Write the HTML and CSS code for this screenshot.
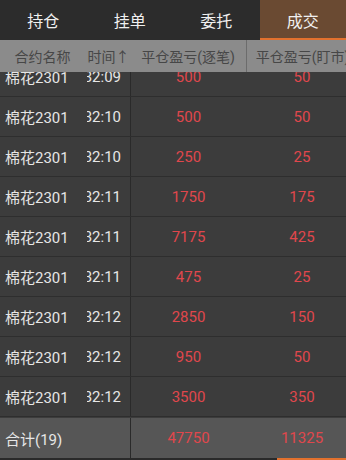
FILE: index.html
```html
<!DOCTYPE html>
<html lang="zh-CN">
<head>
    <meta charset="UTF-8">
    <meta name="viewport" content="width=device-width, initial-scale=1.0">
    <title>成交</title>
    <link rel="stylesheet" href="styles.css">
</head>
<body>
    <div class="tabs">
        <div class="tab">持仓</div>
        <div class="tab">挂单</div>
        <div class="tab">委托</div>
        <div class="tab active">成交</div>
    </div>

    <div class="table">
        <div class="row head">
            <div class="cell name">合约名称</div>
            <div class="cell time-h">时间↑</div>
            <div class="cell num">平仓盈亏(逐笔)</div>
            <div class="cell num last">平仓盈亏(盯市)</div>
        </div>

        <div class="body">
            <div class="rows" id="rows"></div>
        </div>

        <div class="row total">
            <div class="cell name">合计(19)</div>
            <div class="cell time"></div>
            <div class="cell num red">47750</div>
            <div class="cell num red">11325</div>
        </div>
    </div>

    <div class="bottom-bar"><span class="bottom-mark"></span></div>

    <script>
        // time column is scrolled sideways, only the tail of each time shows
        var trades = [
            ['32:09', 500, 50],
            ['32:10', 500, 50],
            ['32:10', 250, 25],
            ['32:11', 1750, 175],
            ['32:11', 7175, 425],
            ['32:11', 475, 25],
            ['32:12', 2850, 150],
            ['32:12', 950, 50],
            ['32:12', 3500, 350]
        ];

        var rows = document.getElementById('rows');
        trades.forEach(function (t) {
            var row = document.createElement('div');
            row.className = 'row item';
            row.innerHTML =
                '<div class="cell name">棉花2301</div>' +
                '<div class="cell time"><span>' + t[0] + '</span></div>' +
                '<div class="cell num red">' + t[1] + '</div>' +
                '<div class="cell num red">' + t[2] + '</div>';
            rows.appendChild(row);
        });
    </script>
</body>
</html>
```

FILE: styles.css
```css
body {
    margin: 0;
    padding: 0;
    width: 346px;
    height: 460px;
    overflow: hidden;
    background-color: #3c3c3c;
    font-family: Roboto, "Noto Sans CJK SC", sans-serif;
    color: #e6e6e6;
}
.tabs {
    display: flex;
    height: 40px;
    background-color: #2c2c2c;
}
.tab {
    flex: 1;
    display: flex;
    align-items: center;
    justify-content: center;
    font-size: 16px;
    color: #f0f0f0;
    box-sizing: border-box;
}
.tab.active {
    background-color: #6a4a32;
    border-bottom: 2px solid #e2712e;
    padding-top: 2px;
}
.table {
    width: 346px;
    overflow: hidden;
}
.row {
    display: grid;
    grid-template-columns: 87px 43px 116px 112px;
    width: 358px;
    box-sizing: border-box;
}
.cell {
    display: flex;
    align-items: center;
    white-space: nowrap;
    overflow: hidden;
}
.head {
    position: relative;
    z-index: 1;
    height: 32px;
    background-color: #8b8b8b;
    color: #474747;
    font-size: 14px;
}
.head .cell {
    justify-content: center;
}
.head .name {
    padding-left: 0;
    padding-right: 2px;
}
.head .last {
    border-left: 1px solid #6c6c6c;
}
.body {
    height: 346px;
    overflow: hidden;
}
.rows {
    margin-top: -15px;
}
.item {
    height: 40px;
    border-bottom: 1px solid #2e2e2e;
    font-size: 15px;
}
.name {
    padding-left: 5px;
}
.time {
    justify-content: flex-end;
    padding-right: 9px;
}
.time span {
    flex-shrink: 0;
}
.num {
    justify-content: center;
}
.item .num:nth-child(3),
.total .num:nth-child(3) {
    border-left: 1px solid #2a2a2a;
}
.red {
    color: #e0474c;
}
.total {
    height: 40px;
    background-color: #565656;
    font-size: 15px;
}
.bottom-bar {
    display: flex;
    height: 2px;
    background-color: #2a2a2a;
}
.bottom-mark {
    width: 69px;
    margin-left: 277px;
    background-color: #e2712e;
}
```
